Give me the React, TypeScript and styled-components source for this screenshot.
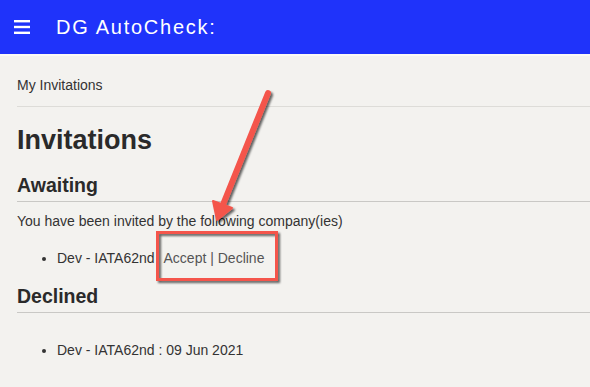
import styled, { createGlobalStyle } from "styled-components";

const GlobalStyle = createGlobalStyle`
  html, body {
    margin: 0;
    padding: 0;
    background: #f3f2ef;
  }
  body {
    font-family: "Liberation Sans", Arial, sans-serif;
    color: #333;
  }
`;

const Page = styled.div`
  position: relative;
  width: 590px;
  height: 387px;
  overflow: hidden;
  background: #f3f2ef;
`;

const TopBar = styled.header`
  height: 54px;
  background: #1f33fa;
  border-bottom: 2px solid #fbfaf6;
  display: flex;
  align-items: center;
  padding-left: 14px;
  gap: 26px;
`;

const MenuIcon = styled.svg`
  width: 16px;
  height: 14px;
  display: block;
`;

const Title = styled.h1`
  margin: 0;
  color: #fff;
  font-size: 20px;
  font-weight: normal;
  letter-spacing: 1.75px;
`;

const Content = styled.main`
  padding-left: 17px;
`;

const Breadcrumb = styled.div`
  font-size: 14px;
  line-height: 20px;
  padding: 19px 0 11px;
  border-bottom: 1px solid #dddcd8;
  color: #333;
`;

const PageTitle = styled.h2`
  margin: 17px 0 0;
  font-size: 27px;
  line-height: 32px;
  font-weight: bold;
  color: #2a2a2a;
`;

const SectionTitle = styled.h3<{ $top: number }>`
  margin: ${(p) => p.$top}px 0 0;
  font-size: 19.5px;
  line-height: 24px;
  font-weight: bold;
  color: #2a2a2a;
  padding-bottom: 4px;
  border-bottom: 1px solid #c9c8c5;
`;

const Text = styled.p`
  margin: 9px 0 0;
  font-size: 14px;
  line-height: 20px;
`;

const List = styled.ul<{ $top: number }>`
  margin: ${(p) => p.$top}px 0 0;
  padding-left: 40px;
  font-size: 14px;
  line-height: 20px;
`;

const Actions = styled.span`
  margin-left: 9px;
  color: #555;
`;

const Overlay = styled.svg`
  position: absolute;
  left: 0;
  top: 0;
  pointer-events: none;
`;

export default function App() {
  return (
    <Page>
      <GlobalStyle />
      <TopBar>
        <MenuIcon viewBox="0 0 16 14">
          <rect x="0" y="0" width="16" height="2.4" fill="#fff" />
          <rect x="0" y="5.8" width="16" height="2.4" fill="#fff" />
          <rect x="0" y="11.6" width="16" height="2.4" fill="#fff" />
        </MenuIcon>
        <Title>DG AutoCheck:</Title>
      </TopBar>
      <Content>
        <Breadcrumb>My Invitations</Breadcrumb>
        <PageTitle>Invitations</PageTitle>
        <SectionTitle $top={17}>Awaiting</SectionTitle>
        <Text>You have been invited by the following company(ies)</Text>
        <List $top={17}>
          <li>
            Dev - IATA62nd
            <Actions>Accept | Decline</Actions>
          </li>
        </List>
        <SectionTitle $top={16}>Declined</SectionTitle>
        <List $top={27}>
          <li>Dev - IATA62nd : 09 Jun 2021</li>
        </List>
      </Content>
      <Overlay width="590" height="387" viewBox="0 0 590 387">
        <defs>
          <filter id="shadow" x="-20%" y="-20%" width="140%" height="140%">
            <feDropShadow dx="2" dy="2" stdDeviation="1.2" floodColor="#000" floodOpacity="0.6" />
          </filter>
        </defs>
        <g filter="url(#shadow)">
          <rect x="157.5" y="232.5" width="119" height="47" fill="none" stroke="#f4554b" strokeWidth="3" />
          <line x1="268" y1="93" x2="222" y2="207" stroke="#f4554b" strokeWidth="6" strokeLinecap="round" />
          <polygon points="217,220 213,201 232,208" fill="#f4554b" stroke="#f4554b" strokeWidth="2" strokeLinejoin="round" />
        </g>
      </Overlay>
    </Page>
  );
}
